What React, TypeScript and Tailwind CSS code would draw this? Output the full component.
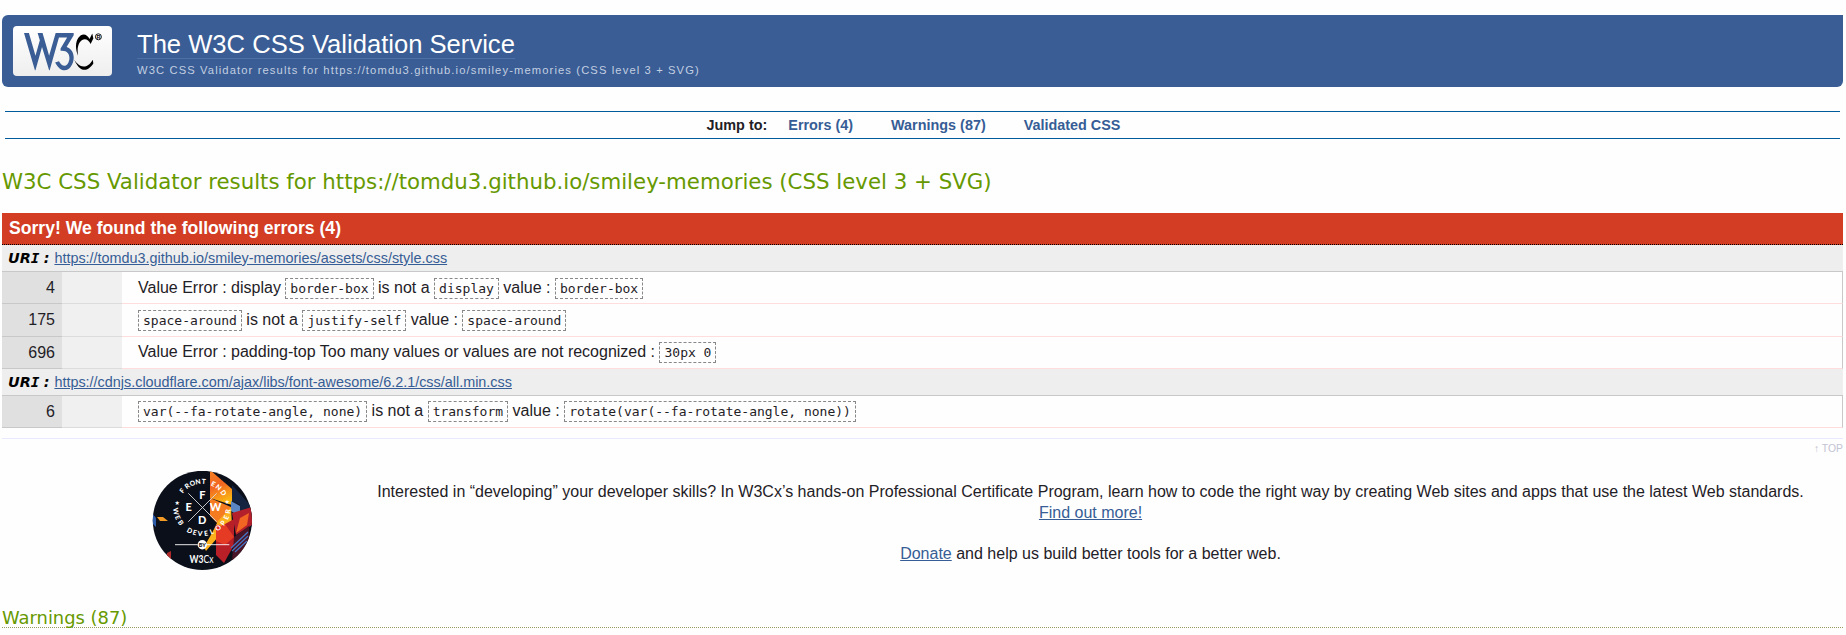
import type { ReactNode } from "react";

function W3CLogo() {
  return (
    <svg className="block h-[50px] w-[99px]" viewBox="0 0 99 50">
      <g transform="translate(11 7) scale(0.546 0.555) translate(-2 -5)">
        <path
          fill="#395d94"
          d="m36,5l12,41l12-41h33v4l-13,21c30,10,2,69-21,28l7-2c15,27,33,-22,3,-19v-4l12-20h-15l-17,59h-1l-13-42l-12,42h-1l-20-67h9l12,41l8-28l-4-13h9"
        />
        <path fill="#000" d="m94,53c15,32,30,14,35,7l-1-7c-16,26-32,3-34,0m28-37c-10-21-34,0-21,30c-5-30 16,-38 23,-21l5-10l-2-9" />
      </g>
      <circle cx="85.4" cy="10.8" r="3" fill="none" stroke="#000" strokeWidth="0.9" />
      <text x="85.5" y="12.8" fontSize="5.5" fontWeight="bold" textAnchor="middle" fontFamily="Liberation Sans, sans-serif">
        R
      </text>
    </svg>
  );
}

const ringTop = [
  ["F", -50], ["R", -35], ["O", -22], ["N", -9], ["T", 4], ["E", 26], ["N", 40], ["D", 56],
] as const;
const ringBottom = [
  ["W", 261], ["E", 247], ["B", 234], ["D", 208], ["E", 196], ["V", 184], ["E", 171], ["L", 158], ["O", 142], ["P", 127], ["E", 113], ["R", 99],
] as const;

function Badge() {
  return (
    <svg className="block h-[100px] w-[100px]" viewBox="0 0 100 100">
      <defs>
        <clipPath id="disc">
          <circle cx="50.4" cy="49.4" r="49.6" />
        </clipPath>
        <linearGradient id="flame" x1="0" y1="0" x2="0.3" y2="1">
          <stop offset="0" stopColor="#f58220" />
          <stop offset="0.5" stopColor="#f26522" />
          <stop offset="1" stopColor="#fbb414" />
        </linearGradient>
      </defs>
      <g clipPath="url(#disc)">
        <rect width="100" height="100" y="-1" fill="#0b0f1a" />
        <path d="M58 -1L80 18V34L58 27z" fill="url(#flame)" />
        <path d="M80 14L100 36V56L88 46V34L80 30z" fill="#14233f" />
        <path d="M79 30L88 35V46L79 40z" fill="#5b86c4" />
        <path d="M58 27L79 36V42L68 55L58 45z" fill="#f47b20" />
        <path d="M66 50L79 36L80 54L66 66L54 80L52 76L60 62z" fill="#fbb01c" />
        <path d="M64 58L82 48V74L72 92L64 84z" fill="#b91f26" />
        <path d="M64 58L73 53L82 66L73 74L64 70z" fill="#e53b25" />
        <path d="M80 42L100 36V54L84 64z" fill="#b3202b" />
        <path d="M88 47L97 42L95 54L84 62z" fill="#f26522" />
        <path d="M82 66L97 55V76L80 90z" fill="#4a1527" />
        <path d="M79 77L96 61M80 80L96 65M83 81L95 70" stroke="#4474c4" strokeWidth="1.2" />
        <path d="M0 42L4 47V56L0 52z" fill="#2d5ba8" />
        <path d="M5 46H11L16 50H8z" fill="#f29a24" />
        <path d="M15 82L19 80V93L15 88z" fill="#b12a2a" />
        <path d="M36.3 22.3L64.7 50.7M64.7 22.3L36.3 50.7" stroke="#d8dade" strokeWidth="0.9" />
        <path d="M23 73.7H45.7M54.7 73.7H77.3" stroke="#fff" strokeWidth="0.9" />
        <circle cx="50.3" cy="73.7" r="4.7" fill="#fff" />
        <circle cx="66.4" cy="56.8" r="3" fill="#e5252a" />
        <g fill="#fff" textAnchor="middle" fontFamily="Lato, sans-serif" fontWeight="900">
          <text x="50.3" y="28.3" fontSize="11">F</text>
          <text x="36.7" y="40.3" fontSize="11">E</text>
          <text x="63.5" y="40.3" fontSize="11">W</text>
          <text x="50.3" y="53" fontSize="11">D</text>
          <text x="50.3" y="75.7" fontSize="5.5" fill="#111">BY</text>
          <text x="25.3" y="33.5" fontSize="6" fontFamily="DejaVu Sans, sans-serif">★</text>
          <text x="75.3" y="33.2" fontSize="6" fontFamily="DejaVu Sans, sans-serif">★</text>
          {ringTop.map(([c, a]) => (
            <text key={a} x="50" y="12.8" fontSize="6.8" transform={`rotate(${a} 50 36.3)`}>
              {c}
            </text>
          ))}
          {ringBottom.map(([c, a]) => (
            <text key={a} x="50" y="65" fontSize="6.8" transform={`rotate(${a - 180} 50 36.3)`}>
              {c}
            </text>
          ))}
          <text x="49.5" y="91.7" fontSize="12" fontWeight="400" textLength="24" lengthAdjust="spacingAndGlyphs">
            <tspan fontWeight="700">W3</tspan>Cx
          </text>
        </g>
      </g>
    </svg>
  );
}

function Code({ children }: { children: ReactNode }) {
  return (
    <code className="inline-block h-[21px] border border-dashed border-[#888] px-1 font-['DejaVu_Sans_Mono',monospace] text-[13px] leading-[19px]">
      {children}
    </code>
  );
}

function UriRow({ href }: { href: string }) {
  return (
    <div className="flex h-[27px] items-baseline border-b border-[#c8c8c8] bg-[#eee] pl-1.5 leading-[27px]">
      <span className="mr-[5px] font-['DejaVu_Sans',sans-serif] text-[14.4px] font-bold italic text-black">
        UR<span className="font-['DejaVu_Sans_Mono',monospace] tracking-[-0.8px]">I</span> :
      </span>
      <a className="text-[14.4px] text-[#365d95] underline" href="#uri">
        {href}
      </a>
    </div>
  );
}

function ErrorRow({ line, tall, raised, children }: { line: number; tall?: boolean; raised?: boolean; children: ReactNode }) {
  return (
    <div className={tall ? "flex h-[33px]" : "flex h-8"}>
      <div className="w-[60px] border-b border-[#c8c8c8] bg-[#e0e0e0] pr-[7px] text-right leading-[31px]">{line}</div>
      <div className="w-[60px] border-b border-[#dcdcdc] bg-[#f0f0f0]" />
      <div
        className={
          "flex-1 border-r border-b border-r-[#c8c8c8] border-b-[#fdd] pl-4 whitespace-nowrap " +
          (raised ? "leading-[29px]" : "leading-[31px]")
        }
      >
        {children}
      </div>
    </div>
  );
}

export default function App() {
  return (
    <div className="h-[635px] overflow-hidden bg-[#fefefe] pt-[15px] pr-[3px] pl-[2px] font-['Liberation_Sans',Arial,sans-serif] text-base text-[#1f2126]">
      <header className="flex h-[72px] rounded-l-[6px] rounded-br-[6px] bg-[#395d94] pt-[11px] pl-[11px]">
        <div className="h-[50px] w-[99px] rounded-[4px] bg-linear-to-b from-white to-[#eee]">
          <W3CLogo />
        </div>
        <div className="ml-[25px]">
          <h1 className="h-[33px] w-fit border-b border-[#4f70a4] text-[25.6px] leading-9 text-white">The W3C CSS Validation Service</h1>
          <p className="mt-[3px] text-[11.2px] leading-4 tracking-[1.12px] text-[#c3cfe2]">
            W3C CSS Validator results for https://tomdu3.github.io/smiley-memories (CSS level 3 + SVG)
          </p>
        </div>
      </header>

      <nav className="mx-[3px] mt-6 flex h-7 justify-center border-y border-[#005a9c] pr-[18px] text-[14.4px] leading-[26px] font-bold">
        <span>Jump to:</span>
        <a className="ml-[21px] text-[#365d95]" href="#errors">Errors (4)</a>
        <a className="ml-[38px] text-[#365d95]" href="#warnings">Warnings (87)</a>
        <a className="ml-[38px] text-[#365d95]" href="#css">Validated CSS</a>
      </nav>

      <h2 className="mt-7 h-[46px] font-['DejaVu_Sans',sans-serif] text-[21.3px] leading-[30px] text-[#690]">
        W3C CSS Validator results for https://tomdu3.github.io/smiley-memories (CSS level 3 + SVG)
      </h2>

      <section id="errors">
        <h3 className="h-8 border-b border-dotted border-black bg-[#d23d24] pl-[7px] text-[17.6px] leading-[31px] font-bold text-white">
          Sorry! We found the following errors (4)
        </h3>
        <UriRow href="https://tomdu3.github.io/smiley-memories/assets/css/style.css" />
        <ErrorRow line={4}>
          Value Error : display <Code>border-box</Code> is not a <Code>display</Code> value : <Code>border-box</Code>
        </ErrorRow>
        <ErrorRow line={175} tall>
          <Code>space-around</Code> is not a <Code>justify-self</Code> value : <Code>space-around</Code>
        </ErrorRow>
        <ErrorRow line={696} raised>
          Value Error : padding-top Too many values or values are not recognized : <Code>30px 0</Code>
        </ErrorRow>
        <UriRow href="https://cdnjs.cloudflare.com/ajax/libs/font-awesome/6.2.1/css/all.min.css" />
        <ErrorRow line={6} raised>
          <Code>var(--fa-rotate-angle, none)</Code> is not a <Code>transform</Code> value : <Code>rotate(var(--fa-rotate-angle, none))</Code>
        </ErrorRow>
      </section>

      <div className="mt-[10px] h-[33px] border-t border-[#e8e8ff] pt-[3px] text-right text-[10.4px] leading-[14px] text-[#c3c3d3]">↑ TOP</div>

      <div className="flex h-[100px]">
        <div className="ml-[150px]">
          <Badge />
        </div>
        <div className="ml-[86px] flex-1 pt-[10px] text-center leading-[21px] whitespace-nowrap">
          <p>
            Interested in “developing” your developer skills? In W3Cx’s hands-on Professional Certificate Program, learn how to code the right way by creating Web sites and apps that use the latest Web standards.
            <br />
            <a className="text-[#365d95] underline" href="#more">Find out more!</a>
          </p>
          <p className="mt-5">
            <a className="text-[#365d95] underline" href="#donate">Donate</a> and help us build better tools for a better web.
          </p>
        </div>
      </div>

      <h3 id="warnings" className="mt-[35px] h-[22px] border-b border-dotted border-[#9a9a60] font-['DejaVu_Sans',sans-serif] text-[17.9px] leading-[24px] text-[#690]">
        Warnings (87)
      </h3>
    </div>
  );
}
